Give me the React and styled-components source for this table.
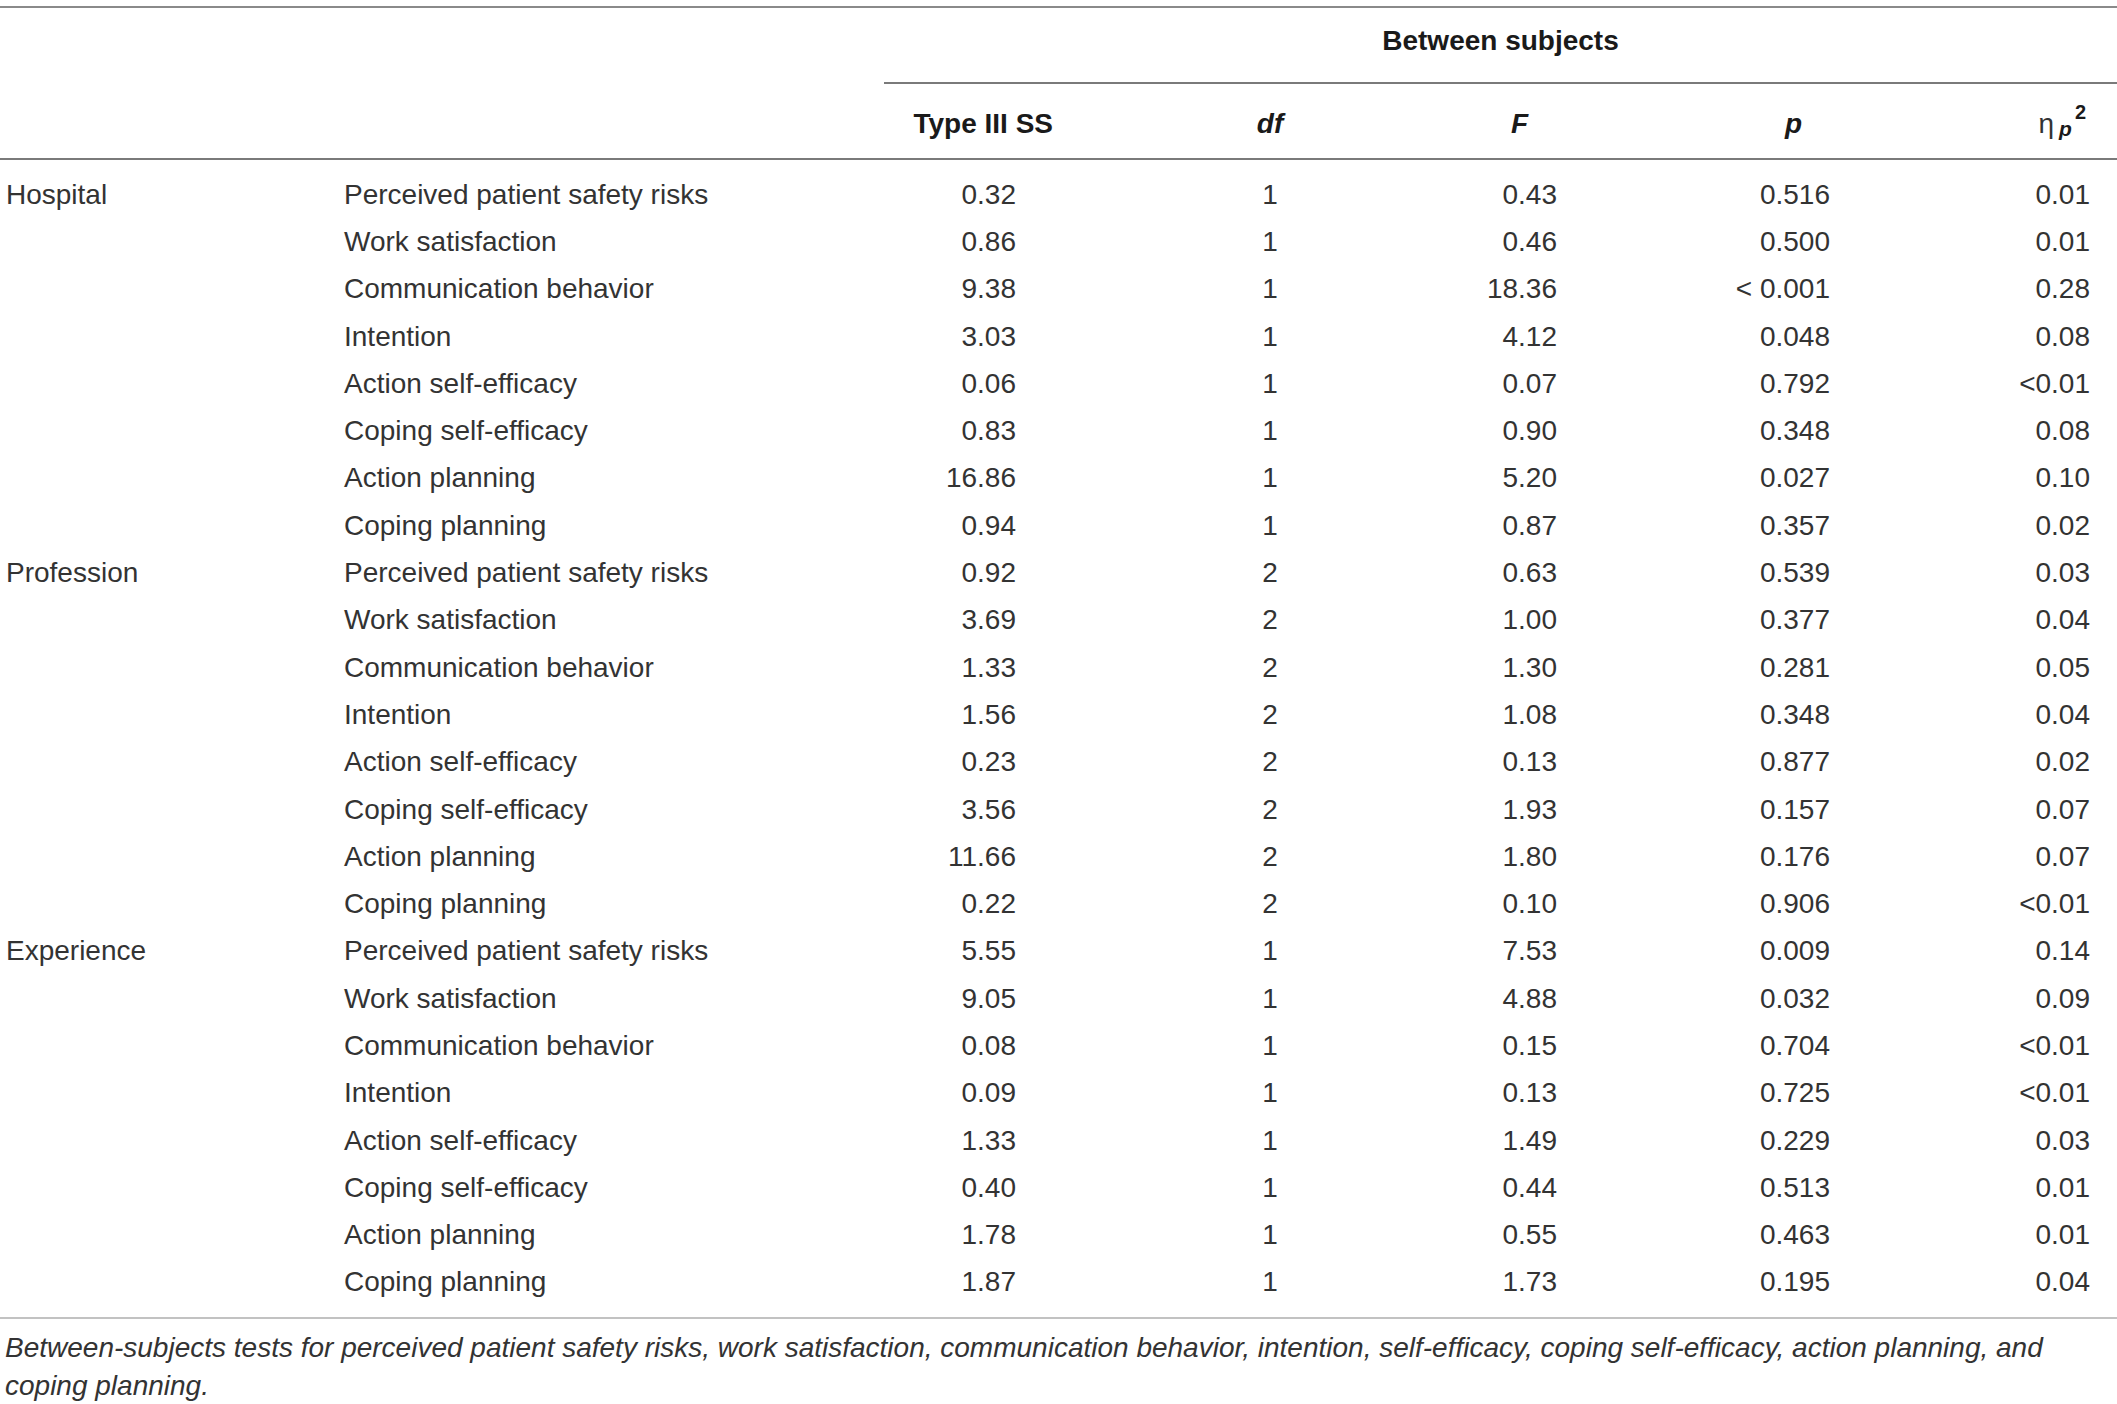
import React from 'react';
import styled, { createGlobalStyle } from 'styled-components';

const GlobalStyle = createGlobalStyle`
  html, body {
    margin: 0;
    padding: 0;
    background: #fff;
  }
  body {
    font-family: "Liberation Sans", Arial, Helvetica, sans-serif;
    color: #333;
  }
`;

const COLS = '344px 540px 256px 260px 260px 270px 1fr';

// per stat column: how the header and the values sit in their track
const statCols = [
  { head: 'Type III SS', hAlign: 'end', hPad: 87, vAlign: 'end', vPad: 124 },
  { head: 'df', italic: true, hAlign: 'center', hPad: 0, vAlign: 'center', vPad: 0 },
  { head: 'F', italic: true, hAlign: 'end', hPad: 132, vAlign: 'end', vPad: 103 },
  { head: 'p', italic: true, hAlign: 'end', hPad: 128, vAlign: 'end', vPad: 100 },
  { head: 'eta', hAlign: 'end', hPad: 31, vAlign: 'end', vPad: 27 },
];

const measures = [
  'Perceived patient safety risks',
  'Work satisfaction',
  'Communication behavior',
  'Intention',
  'Action self-efficacy',
  'Coping self-efficacy',
  'Action planning',
  'Coping planning',
];

const groups = [
  {
    name: 'Hospital',
    rows: [
      ['0.32', '1', '0.43', '0.516', '0.01'],
      ['0.86', '1', '0.46', '0.500', '0.01'],
      ['9.38', '1', '18.36', '< 0.001', '0.28'],
      ['3.03', '1', '4.12', '0.048', '0.08'],
      ['0.06', '1', '0.07', '0.792', '<0.01'],
      ['0.83', '1', '0.90', '0.348', '0.08'],
      ['16.86', '1', '5.20', '0.027', '0.10'],
      ['0.94', '1', '0.87', '0.357', '0.02'],
    ],
  },
  {
    name: 'Profession',
    rows: [
      ['0.92', '2', '0.63', '0.539', '0.03'],
      ['3.69', '2', '1.00', '0.377', '0.04'],
      ['1.33', '2', '1.30', '0.281', '0.05'],
      ['1.56', '2', '1.08', '0.348', '0.04'],
      ['0.23', '2', '0.13', '0.877', '0.02'],
      ['3.56', '2', '1.93', '0.157', '0.07'],
      ['11.66', '2', '1.80', '0.176', '0.07'],
      ['0.22', '2', '0.10', '0.906', '<0.01'],
    ],
  },
  {
    name: 'Experience',
    rows: [
      ['5.55', '1', '7.53', '0.009', '0.14'],
      ['9.05', '1', '4.88', '0.032', '0.09'],
      ['0.08', '1', '0.15', '0.704', '<0.01'],
      ['0.09', '1', '0.13', '0.725', '<0.01'],
      ['1.33', '1', '1.49', '0.229', '0.03'],
      ['0.40', '1', '0.44', '0.513', '0.01'],
      ['1.78', '1', '0.55', '0.463', '0.01'],
      ['1.87', '1', '1.73', '0.195', '0.04'],
    ],
  },
];

const Page = styled.div`
  width: 2117px;
  padding-top: 6px;
`;

const Table = styled.div`
  border-top: 2px solid #8a8a8a;
  border-bottom: 2px solid #c2c2c2;
`;

const GroupHeadRow = styled.div`
  display: grid;
  grid-template-columns: ${COLS};
  height: 76px;
`;

const SpanHead = styled.div`
  grid-column: 3 / -1;
  display: flex;
  align-items: center;
  justify-content: center;
  padding-bottom: 8px;
  border-bottom: 2px solid #7a7a7a;
  font-weight: 700;
  font-size: 28px;
  color: #1a1a1a;
`;

const HeadRow = styled.div`
  display: grid;
  grid-template-columns: ${COLS};
  height: 74px;
  border-bottom: 2px solid #7a7a7a;
`;

const HeadCell = styled.div`
  display: flex;
  align-items: center;
  justify-content: ${(p) => p.$align};
  padding-right: ${(p) => p.$pad}px;
  padding-top: 6px;
  font-size: 28px;
  font-weight: 700;
  font-style: ${(p) => (p.$italic ? 'italic' : 'normal')};
  color: #1a1a1a;
  white-space: nowrap;
`;

const Eta = styled.span`
  font-weight: 400;
  font-style: normal;
  color: #333;
`;

const SubP = styled.span`
  font-size: 21px;
  font-style: italic;
  font-weight: 700;
  position: relative;
  top: 5px;
  margin-left: 5px;
`;

const SupTwo = styled.span`
  font-size: 20px;
  font-weight: 700;
  position: relative;
  top: -12px;
  margin-left: 3px;
`;

const Body = styled.div`
  padding: 11px 0;
`;

const Row = styled.div`
  display: grid;
  grid-template-columns: ${COLS};
  height: 47.3px;
  align-items: center;
  font-size: 28px;
  color: #333;
`;

const GroupLabel = styled.div`
  padding-left: 6px;
  white-space: nowrap;
`;

const Measure = styled.div`
  white-space: nowrap;
`;

const Value = styled.div`
  display: flex;
  justify-content: ${(p) => p.$align};
  padding-right: ${(p) => p.$pad}px;
  white-space: nowrap;
`;

const Caption = styled.p`
  margin: 10px 0 0;
  padding-left: 5px;
  width: 2100px;
  font-size: 28px;
  line-height: 38px;
  font-style: italic;
  color: #333;
`;

const App = () => {
  return (
    <>
      <GlobalStyle />
      <Page>
        <Table>
          <GroupHeadRow>
            <div />
            <div />
            <SpanHead>Between subjects</SpanHead>
          </GroupHeadRow>
          <HeadRow>
            <div />
            <div />
            {statCols.map((c) => (
              <HeadCell key={c.head} $align={c.hAlign} $pad={c.hPad} $italic={c.italic}>
                {c.head === 'eta' ? (
                  <>
                    <Eta>η</Eta>
                    <SubP>p</SubP>
                    <SupTwo>2</SupTwo>
                  </>
                ) : (
                  c.head
                )}
              </HeadCell>
            ))}
          </HeadRow>
          <Body>
            {groups.map((g) =>
              g.rows.map((vals, i) => (
                <Row key={g.name + i}>
                  <GroupLabel>{i === 0 ? g.name : ''}</GroupLabel>
                  <Measure>{measures[i]}</Measure>
                  {vals.map((v, j) => (
                    <Value key={j} $align={statCols[j].vAlign} $pad={statCols[j].vPad}>
                      {v}
                    </Value>
                  ))}
                </Row>
              ))
            )}
          </Body>
        </Table>
        <Caption>
          Between-subjects tests for perceived patient safety risks, work satisfaction, communication
          behavior, intention, self-efficacy, coping self-efficacy, action planning, and coping planning.
        </Caption>
      </Page>
    </>
  );
};

export default App;
